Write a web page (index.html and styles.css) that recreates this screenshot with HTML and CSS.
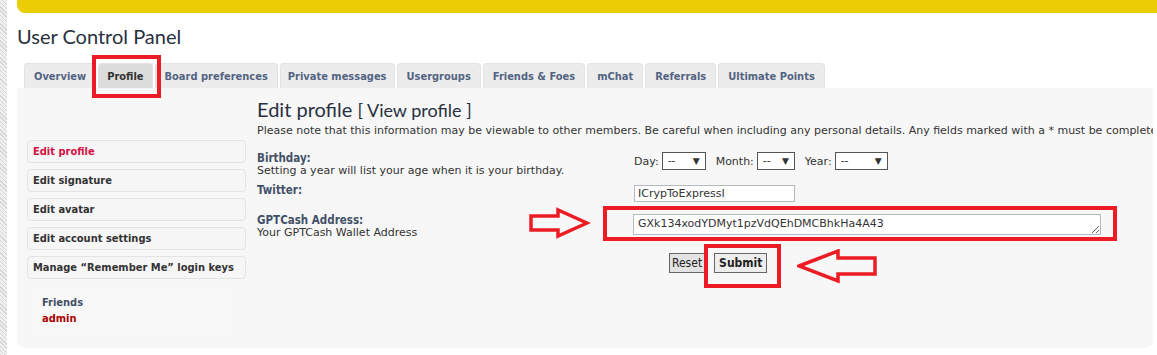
FILE: index.html
```html
<!DOCTYPE html>
<html lang="en">
<head>
    <meta charset="UTF-8">
    <title>User Control Panel</title>
    <link rel="stylesheet" href="styles.css">
</head>
<body>
<div class="page">
    <div class="stripe"></div>
    <div class="wrap">
        <div class="notice"></div>
        <h2 class="ucp-title">User Control Panel</h2>
        <ul class="tabs">
            <li>Overview</li>
            <li class="active">Profile</li>
            <li>Board preferences</li>
            <li>Private messages</li>
            <li>Usergroups</li>
            <li>Friends &amp; Foes</li>
            <li>mChat</li>
            <li>Referrals</li>
            <li>Ultimate Points</li>
        </ul>
        <div class="panel">
            <div class="side">
                <ul class="nav">
                    <li class="current">Edit profile</li>
                    <li>Edit signature</li>
                    <li>Edit avatar</li>
                    <li>Edit account settings</li>
                    <li>Manage “Remember Me” login keys</li>
                </ul>
                <div class="friends">
                    <div class="friends-title">Friends</div>
                    <div class="friend">admin</div>
                </div>
            </div>
            <div class="main">
                <h3>Edit profile <span class="view">[ View profile ]</span></h3>
                <p class="note">Please note that this information may be viewable to other members. Be careful when including any personal details. Any fields marked with a * must be completed.</p>

                <div class="row birthday">
                    <div class="label">
                        <b>Birthday:</b>
                        <span>Setting a year will list your age when it is your birthday.</span>
                    </div>
                    <div class="field">
                        Day: <span class="select day">--</span>
                        Month: <span class="select month">--</span>
                        Year: <span class="select year">--</span>
                    </div>
                </div>

                <div class="row twitter">
                    <div class="label"><b>Twitter:</b></div>
                    <div class="field"><input class="text" type="text" value="ICrypToExpressI"></div>
                </div>

                <div class="row wallet">
                    <div class="label">
                        <b>GPTCash Address:</b>
                        <span>Your GPTCash Wallet Address</span>
                    </div>
                    <div class="field"><textarea class="area">GXk134xodYDMyt1pzVdQEhDMCBhkHa4A43</textarea></div>
                </div>

                <div class="buttons">
                    <button class="btn">Reset</button>
                    <button class="btn primary">Submit</button>
                </div>
            </div>
        </div>
    </div>

    <!-- screenshot annotations -->
    <div class="mark mark-tab"></div>
    <div class="mark mark-wallet"></div>
    <div class="mark mark-submit"></div>
    <svg class="arrow arrow-right" width="62" height="32" viewBox="0 0 62 32">
        <path d="M2 9 H29 V3 L58 16 L29 29 V23 H2 Z" fill="none" stroke="#ed1c24" stroke-width="3.5" stroke-linejoin="miter"/>
    </svg>
    <svg class="arrow arrow-left" width="82" height="36" viewBox="0 0 82 36">
        <path d="M2 17 L41 2 V9 H78 V25 H41 V32 Z" fill="none" stroke="#ed1c24" stroke-width="3.5" stroke-linejoin="miter"/>
    </svg>
</div>
</body>
</html>
```

FILE: styles.css
```css
body {
    margin: 0;
    background: #fff;
    font-family: 'DejaVu Sans', sans-serif;
    font-size: 11px;
    color: #333;
}
.page {
    position: relative;
    display: flex;
    height: 355px;
    overflow: hidden;
}
.stripe {
    width: 7px;
    flex: none;
    background: repeating-linear-gradient(45deg, #d4d4d4 0 1px, #f0f0f0 1px 3px);
}
.wrap {
    flex: 1;
    min-width: 0;
    padding: 0 4px 0 10px;
}
.notice {
    height: 13px;
    margin-right: -4px;
    background: #eacd05;
    border-bottom-left-radius: 8px;
}
.ucp-title {
    font-family: 'Lato', sans-serif;
    font-weight: normal;
    font-size: 20px;
    line-height: 24px;
    color: #28313f;
    margin: 11px 0 15px 0;
}
.tabs {
    list-style: none;
    margin: 0 0 0 7px;
    padding: 0;
    display: flex;
    gap: 2px;
    font-family: 'DejaVu Sans Condensed', sans-serif;
}
.tabs li {
    height: 25px;
    line-height: 26px;
    padding: 0 9px;
    background: #ececec;
    border: 1px solid #e2e2e2;
    border-bottom: none;
    border-radius: 4px 4px 0 0;
    font-weight: bold;
    color: #536482;
    box-sizing: border-box;
}
.tabs li.active {
    background: #dcdcdc;
    color: #333;
    padding: 0 8px;
}
.tabs li:nth-child(4) {
    padding: 0 7px;
}
.panel {
    display: flex;
    height: 260px;
    background: #f7f7f7;
    border-radius: 0 0 7px 7px;
    padding: 0 0 0 10px;
    overflow: hidden;
}
.side {
    width: 219px;
    flex: none;
    padding-top: 52px;
    font-family: 'DejaVu Sans Condensed', sans-serif;
}
.nav {
    list-style: none;
    margin: 0;
    padding: 0;
    display: flex;
    flex-direction: column;
    gap: 6px;
}
.nav li {
    height: 23px;
    line-height: 22px;
    padding-left: 5px;
    border: 1px solid #e3e3e3;
    border-radius: 4px;
    background: #f6f6f6;
    font-weight: bold;
    color: #333;
    box-sizing: border-box;
}
.nav li.current {
    color: #d31141;
}
.friends {
    margin: 9px 14px 0 5px;
    padding: 7px 10px 5px;
    background: #f8f8f8;
    border-radius: 8px;
    font-weight: bold;
    line-height: 16px;
}
.friends-title {
    color: #425067;
}
.friend {
    color: #aa0000;
}
.main {
    flex: 1;
    min-width: 0;
    margin-left: 11px;
    padding-top: 9px;
}
.main h3 {
    font-family: 'Lato', sans-serif;
    font-weight: normal;
    font-size: 20px;
    line-height: 24px;
    color: #28313f;
    margin: 0;
}
.main h3 .view {
    font-size: 18px;
}
.note {
    margin: 2px 0 0 0;
    line-height: 14px;
    white-space: nowrap;
}
.row {
    display: flex;
}
.row .label {
    width: 377px;
    flex: none;
    line-height: 12px;
}
.row .label b {
    display: block;
    color: #425067;
    font-family: 'DejaVu Sans Condensed', sans-serif;
    font-size: 11.5px;
    line-height: 13px;
}
.birthday {
    margin-top: 14px;
}
.birthday .field {
    display: flex;
    align-items: center;
    height: 18px;
    gap: 3px;
}
.select {
    position: relative;
    display: inline-block;
    height: 18px;
    line-height: 16px;
    padding-left: 5px;
    border: 1px solid #555;
    background: #fff;
    box-sizing: border-box;
    margin-right: 7px;
}
.select::after {
    content: '▼';
    position: absolute;
    right: 5px;
    top: 0;
    font-size: 9px;
}
.select.day { width: 44px; }
.select.month { width: 38px; }
.select.year { width: 53px; }
.twitter {
    margin-top: 7px;
}
.text {
    width: 161px;
    height: 17px;
    margin: 1px 0 0;
    padding: 0 3px;
    border: 1px solid #b4bac0;
    font: inherit;
    color: #333;
    box-sizing: border-box;
}
.wallet {
    margin-top: 12px;
}
.area {
    width: 468px;
    height: 21px;
    margin: 0 0 0 -1px;
    padding: 2px 4px;
    border: 1px solid #b4bac0;
    font: inherit;
    color: #333;
    box-sizing: border-box;
    resize: both;
    overflow: hidden;
}
.buttons {
    margin: 14px 0 0 412px;
    display: flex;
    gap: 9px;
}
.btn {
    height: 20px;
    padding: 0 2px;
    border: 1px solid #666;
    background: #e3e3e3;
    font-family: 'DejaVu Sans Condensed', sans-serif;
    font-size: 12px;
    color: #222;
}
.btn.primary {
    background: #eee;
    font-weight: bold;
    padding: 0 4px;
}
.mark {
    position: absolute;
    border: 4px solid #ed1c24;
    box-sizing: border-box;
}
.mark-tab {
    left: 92px;
    top: 55px;
    width: 69px;
    height: 43px;
}
.mark-wallet {
    left: 603px;
    top: 206px;
    width: 514px;
    height: 35px;
}
.mark-submit {
    left: 704px;
    top: 244px;
    width: 77px;
    height: 44px;
}
.arrow {
    position: absolute;
}
.arrow-right {
    left: 529px;
    top: 207px;
}
.arrow-left {
    left: 797px;
    top: 249px;
}
```
